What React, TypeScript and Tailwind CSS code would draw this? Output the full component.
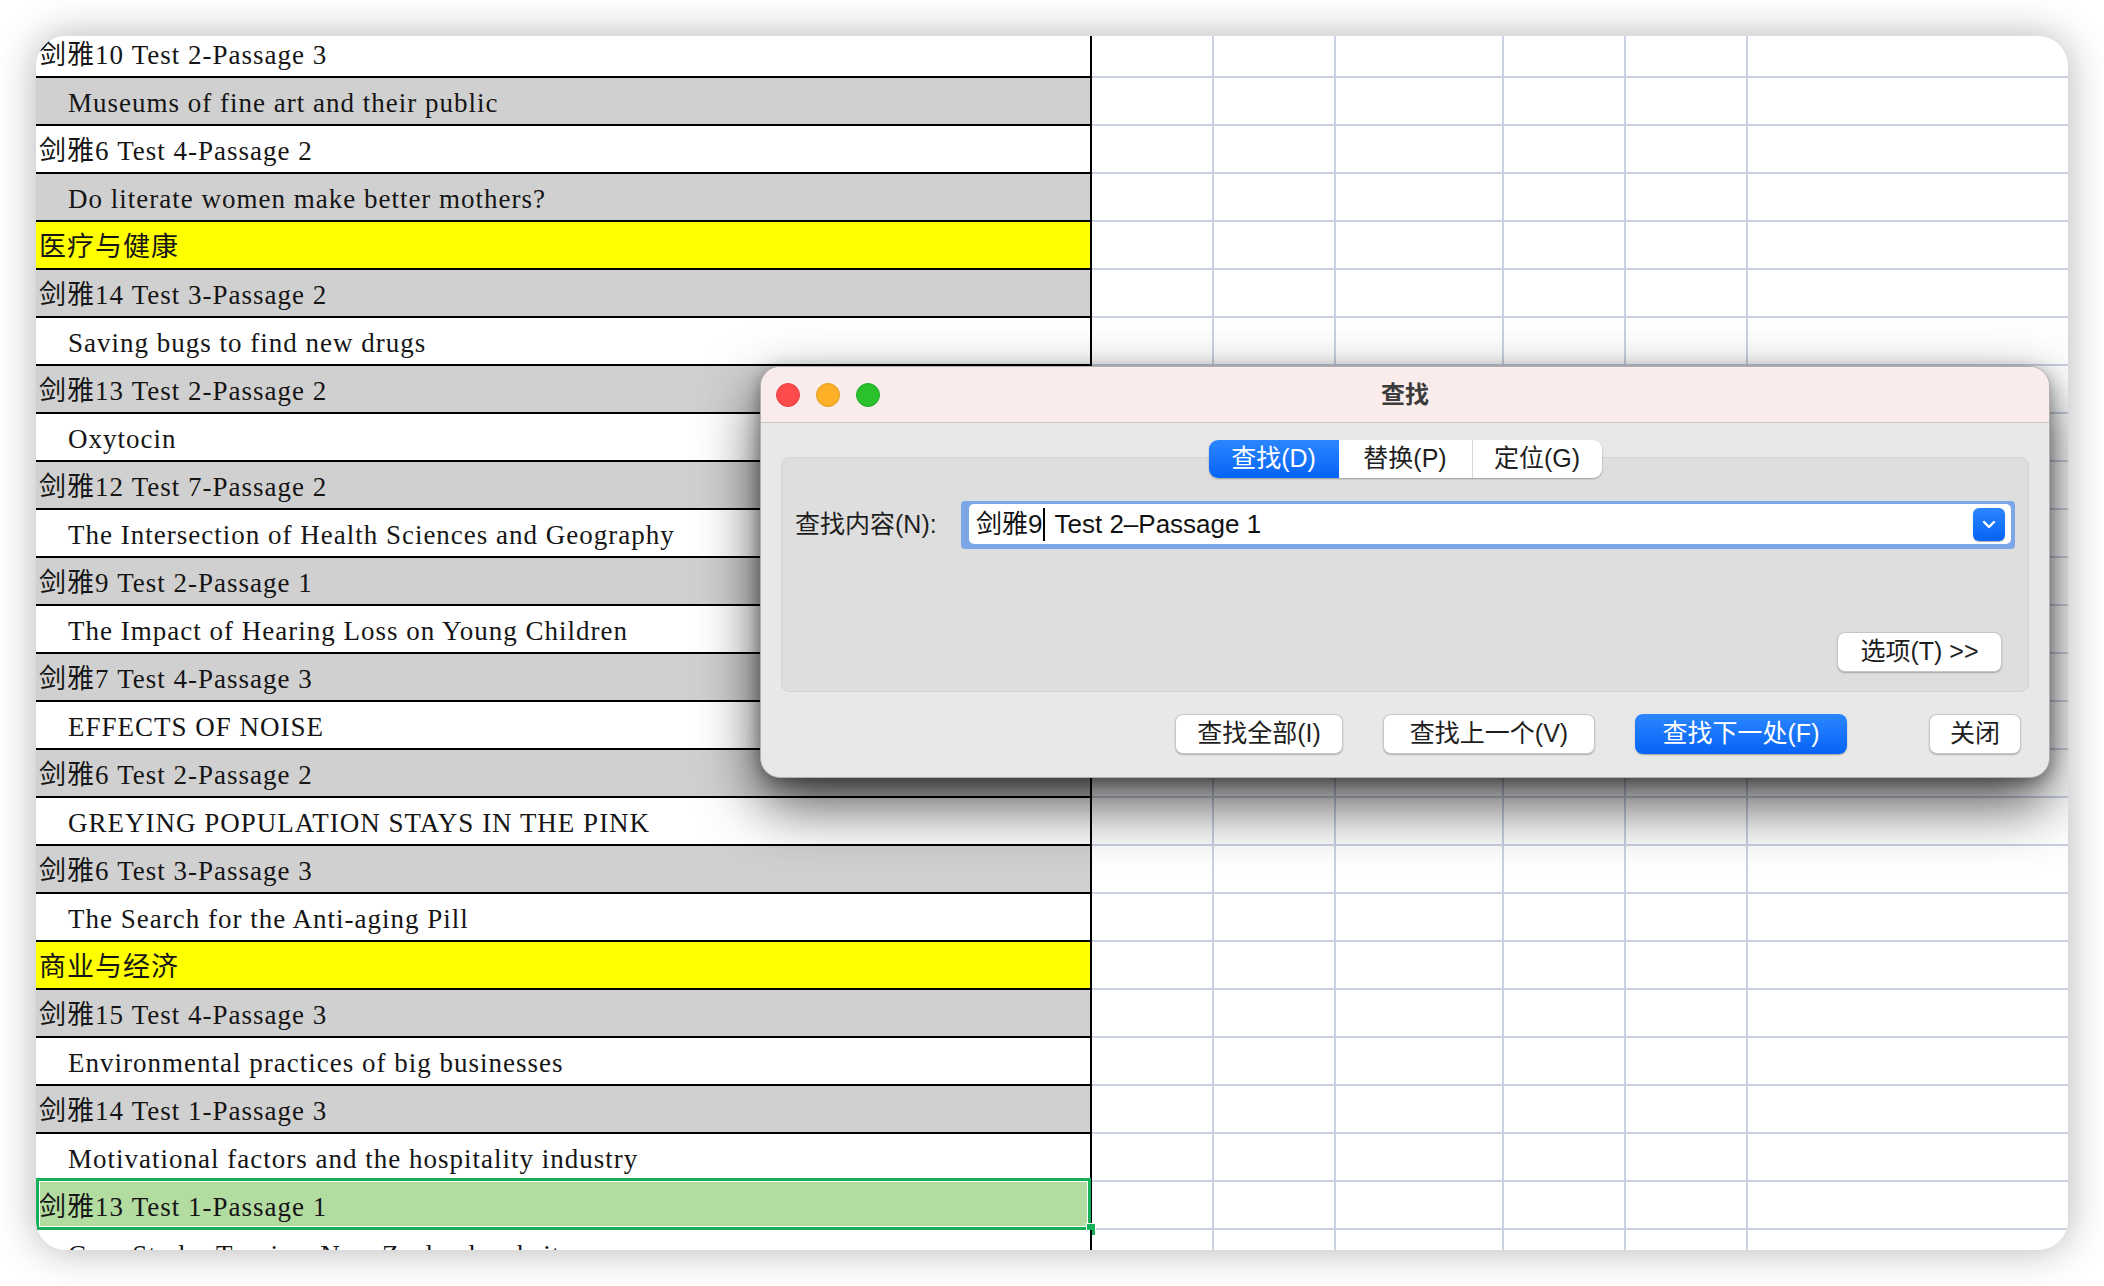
import React from 'react';

type Row = {
  text: string;
  indent?: boolean;
  bg: string;
  selected?: boolean;
};

const rows: Row[] = [
  { text: '剑雅10 Test 2-Passage 3', bg: 'bg-white' },
  { text: 'Museums of fine art and their public', indent: true, bg: 'bg-[#d0d0d0]' },
  { text: '剑雅6 Test 4-Passage 2', bg: 'bg-white' },
  { text: 'Do literate women make better mothers?', indent: true, bg: 'bg-[#d0d0d0]' },
  { text: '医疗与健康', bg: 'bg-[#ffff00]' },
  { text: '剑雅14 Test 3-Passage 2', bg: 'bg-[#d0d0d0]' },
  { text: 'Saving bugs to find new drugs', indent: true, bg: 'bg-white' },
  { text: '剑雅13 Test 2-Passage 2', bg: 'bg-[#d0d0d0]' },
  { text: 'Oxytocin', indent: true, bg: 'bg-white' },
  { text: '剑雅12 Test 7-Passage 2', bg: 'bg-[#d0d0d0]' },
  { text: 'The Intersection of Health Sciences and Geography', indent: true, bg: 'bg-white' },
  { text: '剑雅9 Test 2-Passage 1', bg: 'bg-[#d0d0d0]' },
  { text: 'The Impact of Hearing Loss on Young Children', indent: true, bg: 'bg-white' },
  { text: '剑雅7 Test 4-Passage 3', bg: 'bg-[#d0d0d0]' },
  { text: 'EFFECTS OF NOISE', indent: true, bg: 'bg-white' },
  { text: '剑雅6 Test 2-Passage 2', bg: 'bg-[#d0d0d0]' },
  { text: 'GREYING POPULATION STAYS IN THE PINK', indent: true, bg: 'bg-white' },
  { text: '剑雅6 Test 3-Passage 3', bg: 'bg-[#d0d0d0]' },
  { text: 'The Search for the Anti-aging Pill', indent: true, bg: 'bg-white' },
  { text: '商业与经济', bg: 'bg-[#ffff00]' },
  { text: '剑雅15 Test 4-Passage 3', bg: 'bg-[#d0d0d0]' },
  { text: 'Environmental practices of big businesses', indent: true, bg: 'bg-white' },
  { text: '剑雅14 Test 1-Passage 3', bg: 'bg-[#d0d0d0]' },
  { text: 'Motivational factors and the hospitality industry', indent: true, bg: 'bg-white' },
  { text: '剑雅13 Test 1-Passage 1', bg: 'bg-[#b3dca1]', selected: true },
  { text: 'Case Study: Tourism New Zealand website', indent: true, bg: 'bg-white' },
];

function SheetRow({ row }: { row: Row }) {
  const grid = 'h-full shrink-0 border-b-2 border-r-2 border-[#c9d1e3]';
  return (
    <div className="flex h-[48px]">
      <div
        className={`relative flex h-full w-[1056px] shrink-0 items-center border-b-2 border-r-2 border-black pt-[5px] ${row.bg} ${
          row.indent ? 'pl-[32px]' : 'pl-[3px]'
        }`}
      >
        <span className="whitespace-nowrap text-[27px] leading-none tracking-[1px] text-[#151515]">{row.text}</span>
        {row.selected && (
          <>
            <div className="absolute -top-[4px] left-0 -right-[1px] -bottom-[2px] border-[3px] border-[#16b05b] shadow-[inset_0_0_0_1px_#ffffff]" />
            <div className="absolute -right-[6px] -bottom-[8px] h-[13px] w-[10px] border border-white bg-[#16b05b]" />
          </>
        )}
      </div>
      <div className={`${grid} w-[122px]`} />
      <div className={`${grid} w-[122px]`} />
      <div className={`${grid} w-[168px]`} />
      <div className={`${grid} w-[122px]`} />
      <div className={`${grid} w-[122px]`} />
      <div className="h-full flex-1 border-b-2 border-[#c9d1e3]" />
    </div>
  );
}

function PlainButton({ label, className }: { label: string; className: string }) {
  return (
    <button
      className={`flex h-[40px] items-center justify-center rounded-[8px] border border-[#c6c6c6] bg-white text-[25px] text-[#1e1e1e] shadow-[0_1px_1.5px_rgba(0,0,0,0.25)] ${className}`}
    >
      {label}
    </button>
  );
}

function FindDialog() {
  return (
    <div className="absolute left-[724px] top-[330px] flex h-[412px] w-[1290px] flex-col overflow-hidden rounded-[20px] border border-[#b0b0b0] bg-[#e8e8e8] shadow-[0_26px_60px_rgba(0,0,0,0.7),0_4px_16px_rgba(0,0,0,0.35)] font-['Liberation_Sans','Noto_Sans_CJK_SC',sans-serif]">
      {/* title bar */}
      <div className="grid h-[56px] shrink-0 grid-cols-[1fr_auto_1fr] items-center border-b border-[#cbc5c5] bg-[#fbecec]">
        <div className="flex gap-[16px] pl-[15px]">
          <span className="size-[24px] rounded-full border border-[#e2413f] bg-[#fd4b4b]" />
          <span className="size-[24px] rounded-full border border-[#df9e1f] bg-[#feb026]" />
          <span className="size-[24px] rounded-full border border-[#1ea92a] bg-[#2ac12d]" />
        </div>
        <div className="text-[24px] font-bold text-[#3c3c3c]">查找</div>
        <div />
      </div>

      <div className="flex flex-1 flex-col">
        {/* tabs */}
        <div className="relative z-10 mt-[17px] flex justify-center">
          <div className="flex h-[38px] overflow-hidden rounded-[9px] bg-white text-[25px] shadow-[0_1px_2px_rgba(0,0,0,0.3)]">
            <div className="flex w-[130px] items-center justify-center bg-linear-to-b from-[#2a86ff] to-[#0563f5] text-white">
              查找(D)
            </div>
            <div className="flex w-[134px] items-center justify-center border-r border-[#d9d9d9] text-[#1e1e1e]">替换(P)</div>
            <div className="flex w-[129px] items-center justify-center text-[#1e1e1e]">定位(G)</div>
          </div>
        </div>

        {/* group box */}
        <div className="mx-[20px] -mt-[21px] flex h-[235px] flex-col rounded-[8px] border border-[#d3d3d3] bg-[#dedede] px-[13px] pt-[43px]">
          <div className="flex items-center">
            <div className="w-[166px] shrink-0 text-[25px] text-[#1e1e1e]">查找内容(N):</div>
            <div className="flex h-[48px] flex-1 rounded-[4px] bg-[#7ba7e8] pb-[5px] pl-[8px] pr-[4px] pt-[3px]">
              <div className="flex flex-1 items-center rounded-[5px] bg-white pl-[7px] pr-[6px]">
                <span className="whitespace-nowrap text-[26px] text-[#111]">剑雅9</span>
                <span className="mx-[1px] h-[33px] w-[2px] bg-black" />
                <span className="ml-[8px] whitespace-nowrap text-[26px] text-[#111]">Test 2–Passage 1</span>
                <div className="ml-auto flex h-[33px] w-[32px] items-center justify-center rounded-[6px] bg-linear-to-b from-[#2a86ff] to-[#0563f5] shadow-[0_1px_1px_rgba(0,0,0,0.3)]">
                  <svg width="14" height="9" viewBox="0 0 14 9" fill="none">
                    <path d="M2 2l5 5 5-5" stroke="white" strokeWidth="2.4" strokeLinecap="round" strokeLinejoin="round" />
                  </svg>
                </div>
              </div>
            </div>
          </div>
          <PlainButton label="选项(T) >>" className="mb-[19px] mr-[13px] mt-auto w-[165px] self-end" />
        </div>

        {/* bottom buttons */}
        <div className="mt-[22px] flex justify-end pr-[28px]">
          <PlainButton label="查找全部(I)" className="w-[168px]" />
          <PlainButton label="查找上一个(V)" className="ml-[40px] w-[212px]" />
          <button className="ml-[40px] flex h-[40px] w-[212px] items-center justify-center rounded-[8px] bg-linear-to-b from-[#2a86ff] to-[#0563f5] text-[25px] text-white shadow-[0_1px_1.5px_rgba(0,0,0,0.3)]">
            查找下一处(F)
          </button>
          <PlainButton label="关闭" className="ml-[82px] w-[92px]" />
        </div>
      </div>
    </div>
  );
}

export default function App() {
  return (
    <div className="h-[1286px] w-[2104px] bg-white p-[36px]">
      <div className="relative h-full overflow-hidden rounded-[30px] bg-white shadow-[0_0_40px_rgba(0,0,0,0.3)] font-['Liberation_Serif','Noto_Sans_CJK_SC',serif]">
        <div className="-mt-[6px]">
          {rows.map((row, i) => (
            <SheetRow key={i} row={row} />
          ))}
        </div>
        <FindDialog />
      </div>
    </div>
  );
}
